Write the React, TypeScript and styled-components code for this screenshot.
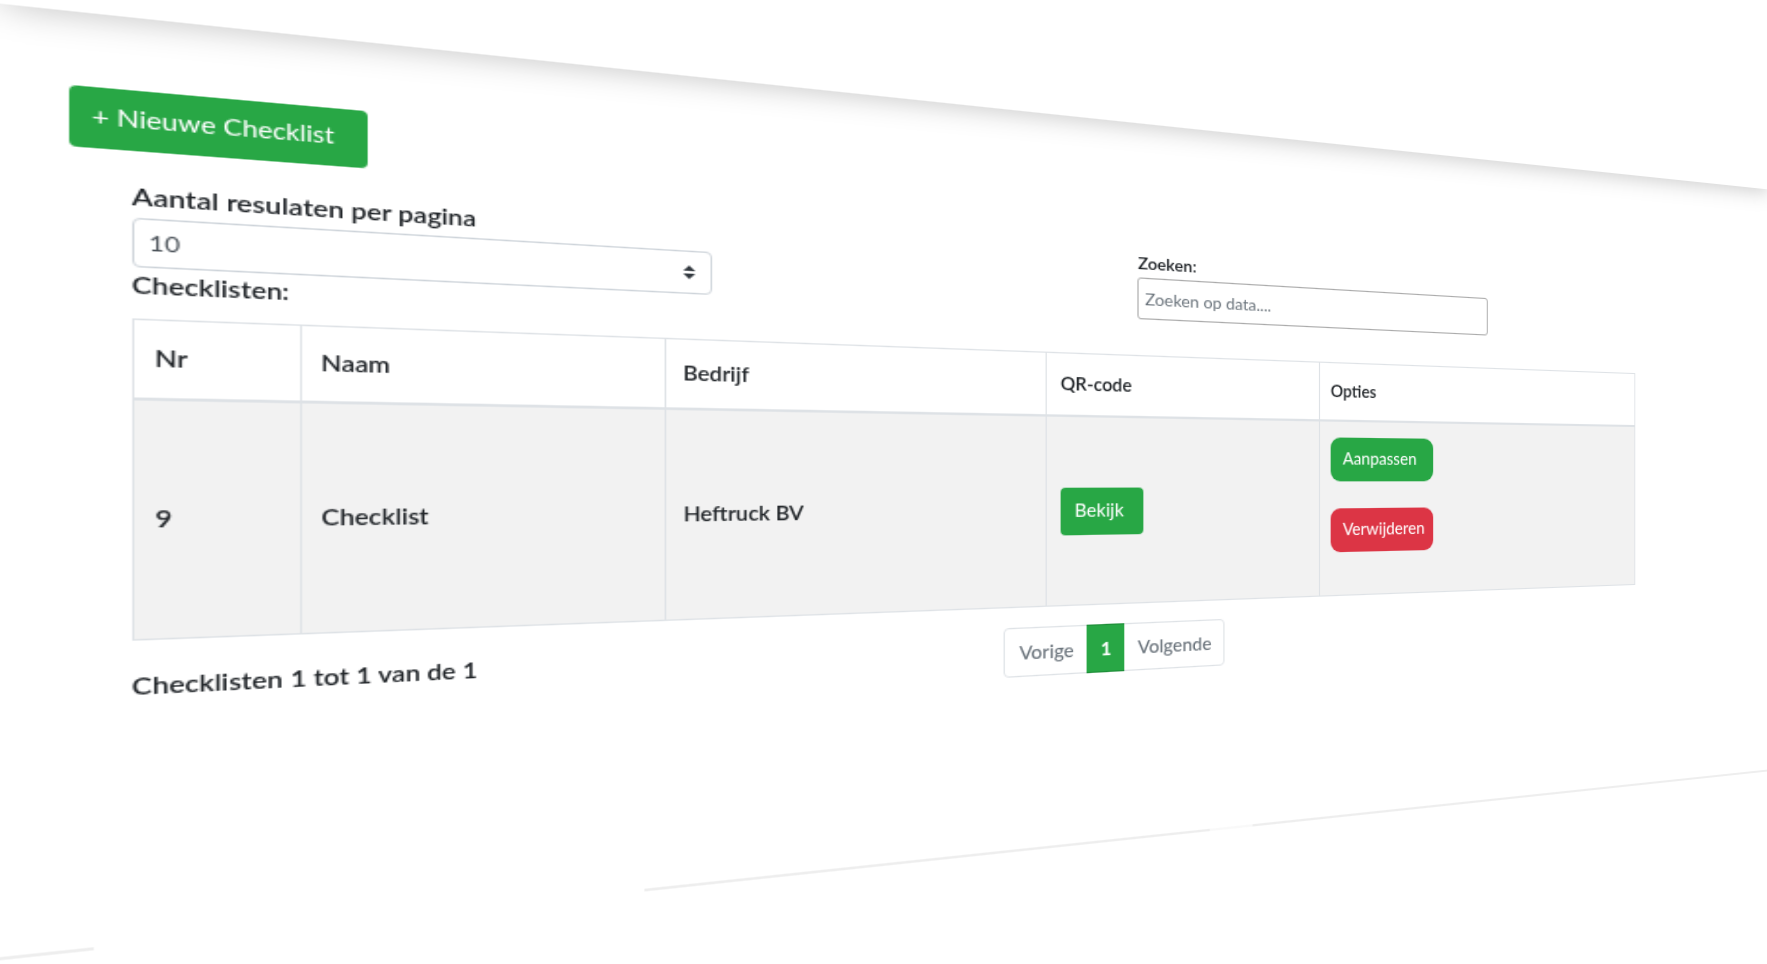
import React from "react";
import styled, { createGlobalStyle } from "styled-components";

const GlobalStyle = createGlobalStyle`
	html, body {
		margin: 0;
		height: 100%;
		overflow: hidden;
		background: #fff;
	}
	* {
		box-sizing: border-box;
	}
`;

const Viewport = styled.div`
	width: 100vw;
	height: 100vh;
	overflow: hidden;
`;

// the page is a 1366px wide layout seen at an angle
const Stage = styled.div`
	width: 1366px;
	margin: -19px 0 0 422px;
	background: #fff;
	color: #212529;
	font-family: "Lato", "Liberation Sans", sans-serif;
	font-size: 14.8px;
	font-weight: 400;
	line-height: 24px;
	transform-origin: 1266px 497px;
	transform: perspective(1864px) rotateY(33.4deg);
`;

// taller than the real bar so that its top edge stays out of the frame
const Navbar = styled.div`
	height: 200px;
	background: #fff;
	box-shadow: 0 2px 20px rgba(0, 0, 0, 0.21);
`;

const TopBar = styled.div`
	padding: 47px 0 0 32.5px;
`;

const NewButton = styled.button`
	width: 155.5px;
	height: 39px;
	padding: 0 7px 3px 0;
	border: 0;
	border-radius: 4px;
	background: #28a745;
	color: #fff;
	font: inherit;
	font-size: 14.8px;
`;

const Content = styled.div`
	width: 1140.4px;
	margin: 19px 0 0 63.8px;
`;

const Controls = styled.div`
	display: flex;
`;

const LengthColumn = styled.div`
	width: 333.2px;
	font-weight: 600;
`;

const LengthLabel = styled.div`
	height: 24px;
	margin-top: -2px;
	margin-bottom: 2px;
	font-size: 15.5px;
`;

const SelectBox = styled.div`
	display: flex;
	align-items: center;
	justify-content: space-between;
	height: 32px;
	padding: 0 10px 0 7.5px;
	border: 1px solid #ced4da;
	border-radius: 4px;
	color: #495057;
	font-size: 13.6px;
	font-weight: 400;
`;

const ListTitle = styled.div`
	height: 24px;
	margin-top: -1.3px;
	margin-bottom: 1.3px;
	font-size: 15.1px;
`;

const SearchColumn = styled.div`
	width: 328px;
	margin-left: 317.5px;
`;

const SearchLabel = styled.div`
	height: 24px;
	font-size: 14.2px;
	font-weight: 600;
`;

const SearchInput = styled.input`
	display: block;
	width: 100%;
	height: 34.5px;
	padding: 0 5px;
	border: 1px solid #aaa;
	border-radius: 3px;
	font: inherit;
	font-size: 14.3px;
	&::placeholder {
		color: #6c757d;
		opacity: 1;
	}
`;

const Table = styled.table`
	width: 1140.4px;
	margin-top: 9.4px;
	border-collapse: collapse;
	table-layout: fixed;
`;

const HeadCell = styled.th`
	height: 51px;
	padding: 0 10px 2.5px 10.5px;
	border: 1px solid #dee2e6;
	border-bottom-width: 2px;
	text-align: left;
	font-weight: 600;
`;

const BodyRow = styled.tr`
	background: #f2f2f2;
`;

const BodyCell = styled.td`
	height: 156px;
	padding: 0 10.8px 2.5px;
	border: 1px solid #dee2e6;
	font-weight: 600;
`;

const OptionsCell = styled(BodyCell)`
	vertical-align: top;
	padding-top: 14px;
`;

const ButtonCell = styled(BodyCell)`
	padding-bottom: 0;
`;

const ActionButton = styled.button<{ $color: string; $round?: boolean; $width: number }>`
	display: block;
	width: ${(props) => props.$width}px;
	height: 39px;
	padding: 0 0 2px 11px;
	border: 0;
	border-radius: ${(props) => (props.$round ? "9px" : "4px")};
	background: ${(props) => props.$color};
	color: #fff;
	font: inherit;
	font-size: 15.2px;
	font-weight: 400;
	text-align: left;
	& + & {
		margin-top: 24px;
	}
`;

const BottomRow = styled.div`
	display: flex;
	margin-top: 16px;
`;

const Info = styled.div`
	width: 542.7px;
	padding-top: 0.5px;
	font-weight: 600;
	font-size: 15.2px;
`;

const Pagination = styled.div`
	display: flex;
	height: 40px;
	border: 1px solid #dee2e6;
	border-radius: 4px;
	color: #6c757d;
	font-size: 15.4px;
`;

const PageLink = styled.div<{ $active?: boolean; $width: number }>`
	display: flex;
	align-items: center;
	justify-content: center;
	width: ${(props) => props.$width}px;
	margin: ${(props) => (props.$active ? "-1px 0" : "0")};
	padding-bottom: 1.5px;
	background: ${(props) => (props.$active ? "#28a745" : "transparent")};
	border-block: ${(props) => (props.$active ? "1px solid #1e8e38" : "0")};
	color: ${(props) => (props.$active ? "#fff" : "inherit")};
	font-weight: ${(props) => (props.$active ? 700 : 500)};
`;

const FooterRule = styled.div`
	display: flex;
	margin-top: 139px;
`;

const RuleStub = styled.div`
	flex: 0 0 45px;
	height: 2px;
	background: #eee;
`;

const RuleGap = styled.div`
	flex: 0 0 307.5px;
`;

// a short part of the long rule is almost washed out
const RuleLine = styled.div`
	flex: 1;
	height: 2px;
	background: linear-gradient(90deg, #eee 423px, #f9f9f9 423px, #f9f9f9 461px, #eee 461px);
`;

const App = () => {
	return (
		<Viewport>
			<GlobalStyle />
			<Stage>
				<Navbar />
				<TopBar>
					<NewButton>+ Nieuwe Checklist</NewButton>
				</TopBar>
				<Content>
					<Controls>
						<LengthColumn>
							<LengthLabel>Aantal resulaten per pagina</LengthLabel>
							<SelectBox>
								10
								<svg width="8" height="10" viewBox="0 0 4 5">
									<path d="M2 0L0 2h4zm0 5L0 3h4z" fill="#343a40" />
								</svg>
							</SelectBox>
							<ListTitle>Checklisten:</ListTitle>
						</LengthColumn>
						<SearchColumn>
							<SearchLabel>Zoeken:</SearchLabel>
							<SearchInput placeholder="Zoeken op data...." />
						</SearchColumn>
					</Controls>
					<Table>
						<colgroup>
							<col style={{ width: 87 }} />
							<col style={{ width: 215.6 }} />
							<col style={{ width: 273 }} />
							<col style={{ width: 235.2 }} />
							<col />
						</colgroup>
						<thead>
							<tr>
								<HeadCell>Nr</HeadCell>
								<HeadCell>Naam</HeadCell>
								<HeadCell>Bedrijf</HeadCell>
								<HeadCell>QR-code</HeadCell>
								<HeadCell>Opties</HeadCell>
							</tr>
						</thead>
						<tbody>
							<BodyRow>
								<BodyCell>9</BodyCell>
								<BodyCell>Checklist</BodyCell>
								<BodyCell>Heftruck BV</BodyCell>
								<ButtonCell>
									<ActionButton $color="#28a745" $width={68}>
										Bekijk
									</ActionButton>
								</ButtonCell>
								<OptionsCell>
									<ActionButton $color="#28a745" $round $width={100}>
										Aanpassen
									</ActionButton>
									<ActionButton $color="#dc3545" $round $width={100}>
										Verwijderen
									</ActionButton>
								</OptionsCell>
							</BodyRow>
						</tbody>
					</Table>
					<BottomRow>
						<Info>Checklisten 1 tot 1 van de 1</Info>
						<Pagination>
							<PageLink $width={65}>Vorige</PageLink>
							<PageLink $active $width={31}>
								1
							</PageLink>
							<PageLink $width={85}>Volgende</PageLink>
						</Pagination>
					</BottomRow>
				</Content>
				<FooterRule>
					<RuleStub />
					<RuleGap />
					<RuleLine />
				</FooterRule>
			</Stage>
		</Viewport>
	);
};

export default App;
